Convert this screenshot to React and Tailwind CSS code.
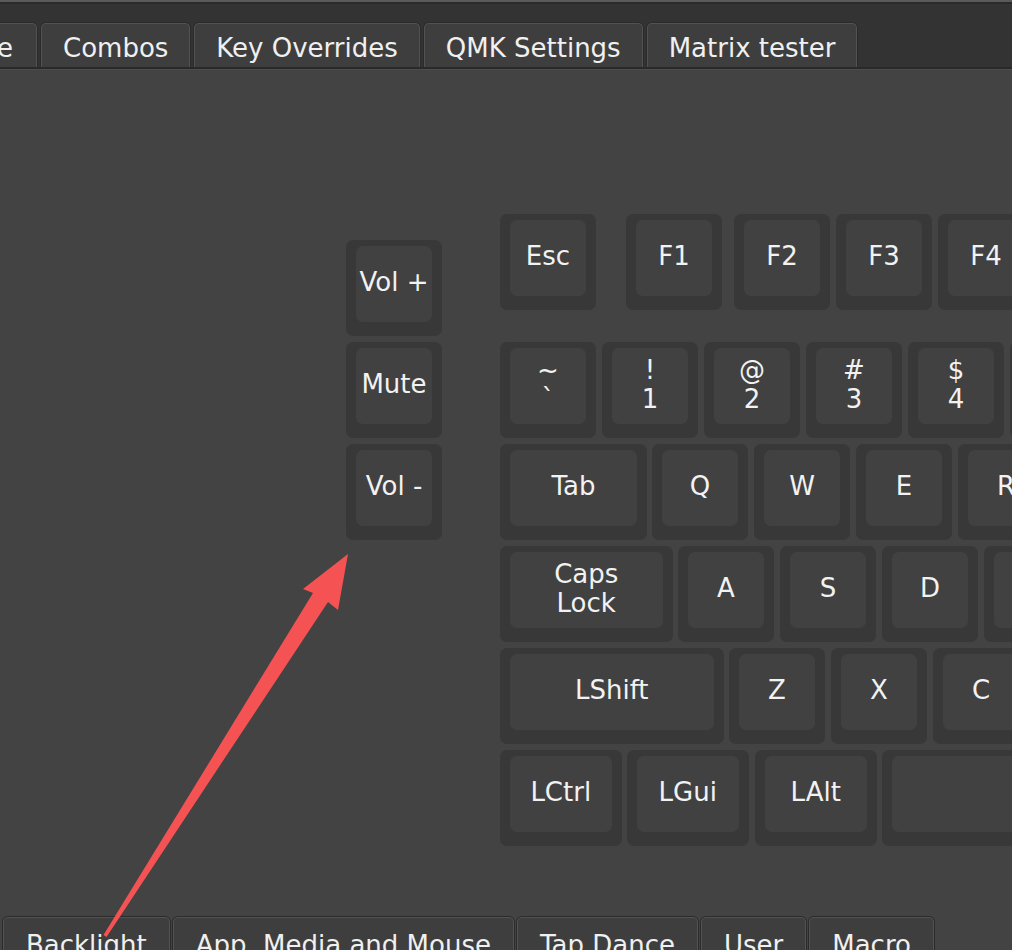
const topTabs = ['Tap Dance', 'Combos', 'Key Overrides', 'QMK Settings', 'Matrix tester']
const bottomTabs = ['Backlight', 'App, Media and Mouse', 'Tap Dance', 'User', 'Macro']

// keyboard origin is (346, 214) on the page; x/y are page coords, w in units
const U = 102
const keys = [
  { x: 346, y: 240, label: ['Vol +'] },
  { x: 346, y: 342, label: ['Mute'] },
  { x: 346, y: 444, label: ['Vol -'] },

  { x: 500, y: 214, label: ['Esc'] },
  { x: 626, y: 214, label: ['F1'] },
  { x: 734, y: 214, label: ['F2'] },
  { x: 836, y: 214, label: ['F3'] },
  { x: 938, y: 214, label: ['F4'] },

  { x: 500, y: 342, label: ['~', '`'] },
  { x: 602, y: 342, label: ['!', '1'] },
  { x: 704, y: 342, label: ['@', '2'] },
  { x: 806, y: 342, label: ['#', '3'] },
  { x: 908, y: 342, label: ['$', '4'] },
  { x: 1010, y: 342, label: ['%', '5'] },

  { x: 500, y: 444, w: 1.5, label: ['Tab'] },
  { x: 652, y: 444, label: ['Q'] },
  { x: 754, y: 444, label: ['W'] },
  { x: 856, y: 444, label: ['E'] },
  { x: 958, y: 444, label: ['R'] },

  { x: 500, y: 546, w: 1.75, label: ['Caps', 'Lock'] },
  { x: 678, y: 546, label: ['A'] },
  { x: 780, y: 546, label: ['S'] },
  { x: 882, y: 546, label: ['D'] },
  { x: 984, y: 546, label: ['F'] },

  { x: 500, y: 648, w: 2.25, label: ['LShift'] },
  { x: 729, y: 648, label: ['Z'] },
  { x: 831, y: 648, label: ['X'] },
  { x: 933, y: 648, label: ['C'] },

  { x: 500, y: 750, w: 1.25, label: ['LCtrl'] },
  { x: 627, y: 750, w: 1.25, label: ['LGui'] },
  { x: 755, y: 750, w: 1.25, label: ['LAlt'] },
  { x: 882, y: 750, w: 6.25, label: [''] },
]

const Key = ({ k }) => {
  const width = (k.w || 1) * U - 6
  return (
    <div
      className="absolute rounded-[7px] bg-[#383838] pt-[6px] pl-[10px] pr-[10px] pb-[14px]"
      style={{ left: k.x - 346, top: k.y - 214, width, height: 96 }}
    >
      <div className="flex h-full w-full flex-col items-center justify-center rounded-[7px] bg-[#414141] pb-[3px] text-center leading-[29px] text-[#f2f2f2]">
        {k.label.map((l, i) => (
          <span key={i}>{l}</span>
        ))}
      </div>
    </div>
  )
}

const Tab = ({ children, className = '' }) => (
  <div
    className={`flex h-[44px] shrink-0 items-start rounded-t-[5px] border border-b-0 border-[#525252] bg-[#3e3e3e] whitespace-nowrap text-[#f0f0f0] shadow-[0_0_0_1px_#2b2b2b] ${className}`}
  >
    {children}
  </div>
)

export default function App() {
  return (
    <div
      className="relative flex h-[950px] w-[1012px] flex-col overflow-hidden bg-[#434343] text-[26px]"
      style={{ fontFamily: '"DejaVu Sans", "Noto Sans", sans-serif' }}
    >
      {/* top tab bar */}
      <div className="h-[2px] bg-[#5a5a5a]" />
      <div className="h-[2px] bg-[#2a2a2a]" />
      <div className="flex h-[63px] items-end gap-[4px] bg-[#333333]">
        <Tab className="-ml-[144px] w-[181px] px-[21px] pt-[5px]">Tap Dance</Tab>
        {topTabs.slice(1).map((t) => (
          <Tab key={t} className="px-[21px] pt-[5px]">
            {t}
          </Tab>
        ))}
      </div>
      <div className="h-[2px] bg-[#292929]" />
      <div className="h-[1px] bg-[#4d4d4d]" />

      {/* keyboard area */}
      <div className="relative flex-1">
        <div className="relative ml-[346px] mt-[144px] h-[632px] w-[800px]">
          {keys.map((k, i) => (
            <Key key={i} k={k} />
          ))}
        </div>
      </div>

      {/* bottom tab bar */}
      <div className="flex h-[33px] items-start gap-[3px] pl-[3px]">
        {bottomTabs.map((t) => (
          <Tab key={t} className="px-[22px] pt-[8px]">
            {t}
          </Tab>
        ))}
      </div>

      {/* annotation arrow */}
      <svg
        className="pointer-events-none absolute left-0 top-0"
        width="1012"
        height="950"
        viewBox="0 0 1012 950"
      >
        <polygon
          points="103.5,935 106.5,937 328,602 338,610 348,554 303,589 313,593"
          fill="#f55353"
        />
      </svg>
    </div>
  )
}
